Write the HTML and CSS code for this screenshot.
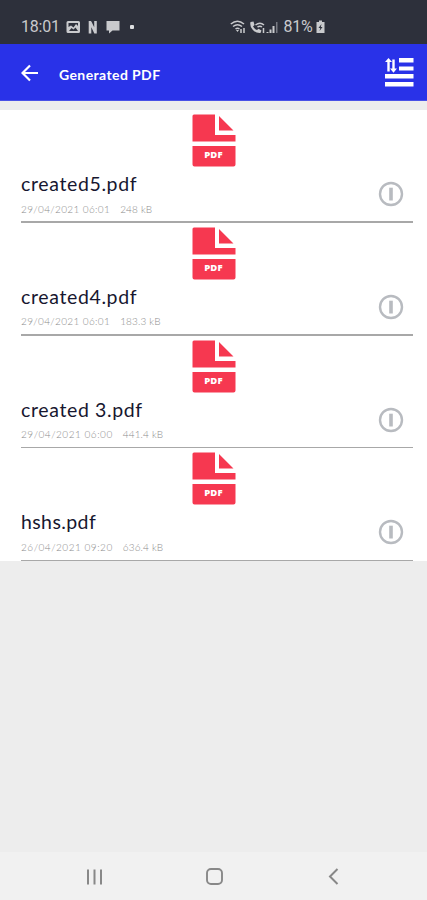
FILE: index.html
```html
<!DOCTYPE html>
<html lang="en">
<head>
<meta charset="utf-8">
<title>Generated PDF</title>
<link rel="stylesheet" href="styles.css">
</head>
<body>
<svg width="0" height="0" class="defs" aria-hidden="true">
  <symbol id="pdf" viewBox="0 0 44 53">
    <path d="M2 .5H23V21H43.5V27.5H.5V2Q.5.5 2 .5ZM27 2V16.5H41.5ZM.5 32H43.5V50.5Q43.5 52.5 41.5 52.5H2.500Q.5 52.500 .5 50.500Z" fill="#f63850"/>
  </symbol>
  <symbol id="info" viewBox="0 0 26 26">
    <circle cx="13" cy="13" r="11" fill="none" stroke="#b8bbc0" stroke-width="2.400"/>
    <path d="M13 6.700V19.500" stroke="#b8bbc0" stroke-width="3.600"/>
  </symbol>
</svg>
<div class="screen">
  <div class="status">
    <span class="time">18:01</span>
    <svg class="notes" width="72" height="16" viewBox="0 0 72 16">
      <path fill-rule="evenodd" fill="#c9cacd" d="M2 2H12.500Q14 2 14 3.500V12.500Q14 14 12.500 14H2Q.5 14 .5 12.500V3.500Q.5 2 2 2ZM2.500 4V8L5 6.500 7.500 8.500 10 5 12 7V4ZM3 12H12L9.500 8.500 7.500 10.500 5.500 9Z"/>
      <path d="M24 2V14.500M29.500 2V14.500M24 2.500L29.500 14" fill="none" stroke="#c9cacd" stroke-width="2.600"/>
      <path d="M40.500 2H53.500V11.500H46.500L43 14.500V11.500H40.500Z" fill="#c9cacd"/>
      <rect x="64" y="6" width="4" height="4" rx="1" fill="#dedfe1"/>
    </svg>
    <svg class="signal" width="50" height="16" viewBox="0 0 50 16">
      <g fill="none" stroke="#c9cacd" stroke-width="1.500">
        <path d="M.8 5Q7.500-.5 14 5M3 7.500Q7.500 4 12 7.500M5.500 10Q7.500 8.500 9.500 10"/>
        <path d="M11 10V14M14 14V9M25.500 6Q30 2.500 34 6M27.500 8Q30 6.500 32 8M33.500 9V14"/>
      </g>
      <path d="M20.500 3L23.500 2.500 24.500 6 23 7.500Q24.500 10 27 11L28.500 9.800 31.500 11.500 30.500 14Q26 14.500 22.500 10.500 19.500 7 20.500 3ZM6 11H9L7.500 13Z" fill="#c9cacd"/>
      <path d="M36.500 13H38.500V14H36.500ZM39.500 10.500H41.500V14H39.500ZM42.500 7H44.500V14H42.500Z" fill="#c9cacd"/>
      <path d="M46 3H47.500V14H46Z" fill="#777982"/>
    </svg>
    <span class="percent">81%</span>
    <svg class="battery" width="9" height="14" viewBox="0 0 9 14">
      <path fill="#c9cacd" fill-rule="evenodd" d="M3 .5H6V2H8.500V13H.5V2H3ZM5.500 4L2.500 8H4.300L3.500 11 6.500 7H4.800Z"/>
    </svg>
  </div>
  <header class="bar">
    <svg class="back" width="18" height="18" viewBox="0 0 18 18">
      <path d="M17 9H2M9 1.500L1.500 9 9 16.500" fill="none" stroke="#fff" stroke-width="2.200"/>
    </svg>
    <h1>Generated PDF</h1>
    <svg class="sort" width="30" height="31" viewBox="0 0 30 31">
      <path fill="#fff" d="M15 1H29.500V5.500H15ZM15 9.500H29.500V13.500H15ZM1 17H29.500V21.500H1ZM1 25H29.500V29.500H1ZM4.500 1L8 5H5.700V14.500H3.300V5H1ZM8.300 2.500H10.700V11.500H13L9.500 15.800 6 11.500H8.300Z"/>
    </svg>
  </header>
  <ul class="files">
    <li class="file">
      <div class="icon"><svg width="44" height="53"><use href="#pdf"/></svg><span class="label">PDF</span></div>
      <div class="name">created5.pdf</div>
      <div class="meta"><span class="date">29/04/2021 06:01</span><span>248 kB</span></div>
      <svg class="info" width="26" height="26"><use href="#info"/></svg>
    </li>
    <li class="file">
      <div class="icon"><svg width="44" height="53"><use href="#pdf"/></svg><span class="label">PDF</span></div>
      <div class="name">created4.pdf</div>
      <div class="meta"><span class="date">29/04/2021 06:01</span><span>183.3 kB</span></div>
      <svg class="info" width="26" height="26"><use href="#info"/></svg>
    </li>
    <li class="file">
      <div class="icon"><svg width="44" height="53"><use href="#pdf"/></svg><span class="label">PDF</span></div>
      <div class="name">created 3.pdf</div>
      <div class="meta wide"><span class="date">29/04/2021 06:00</span><span>441.4 kB</span></div>
      <svg class="info" width="26" height="26"><use href="#info"/></svg>
    </li>
    <li class="file">
      <div class="icon"><svg width="44" height="53"><use href="#pdf"/></svg><span class="label">PDF</span></div>
      <div class="name short">hshs.pdf</div>
      <div class="meta wide"><span class="date">26/04/2021 09:20</span><span>636.4 kB</span></div>
      <svg class="info" width="26" height="26"><use href="#info"/></svg>
    </li>
  </ul>
  <nav class="nav">
    <svg width="18" height="18" viewBox="0 0 18 18"><path d="M2 1.500V16.500M8.500 1.500V16.500M15 1.500V16.500" stroke="#888" stroke-width="2" fill="none"/></svg>
    <svg width="18" height="18" viewBox="0 0 18 18"><rect x="1" y="1" width="15" height="15" rx="4" stroke="#888" stroke-width="1.900" fill="none"/></svg>
    <svg width="18" height="18" viewBox="0 0 18 18"><path d="M12.500 1L5 8.500 12.500 16" stroke="#888" stroke-width="2" fill="none"/></svg>
  </nav>
</div>
</body>
</html>
```
FILE: styles.css
```css
* { box-sizing: border-box; }
body { margin: 0; font-family: Lato, "Liberation Sans", sans-serif; }
svg { display: block; flex: none; }
.defs { position: absolute; }
.screen { width: 427px; height: 900px; display: flex; flex-direction: column; background: #ededed; overflow: hidden; }
.status { height: 44px; padding: 10px 0 0 21px; display: flex; align-items: center; background: #2d303b; color: #c9cacd; font: 16px/20px Roboto, sans-serif; }
.time { width: 45px; letter-spacing: -0.2px; }
.percent { width: 31px; margin-left: 4px; letter-spacing: -0.3px; }
.signal { margin-left: 91.500px; }
.battery { margin-left: 1px; }
.bar { height: 57px; padding: 0 13px 0 21px; display: flex; align-items: center; background: #2932e8; border-bottom: 1px solid #4a51e6; color: #fff; }
.back { margin-top: 1px; }
.bar h1 { flex: 1; margin: 5px 0 0 20px; font-size: 14px; line-height: 18px; font-weight: 700; letter-spacing: 0.4px; }
.sort { margin-top: 1px; }
.files { margin: 9px 0 0; padding: 0; list-style: none; background: #fff; }
.file { height: 112.8px; padding: 4px 14px 0 21px; display: grid; grid-template: 53px 29px 1fr / 1fr 26px; }
.file::after { content: ""; grid-area: 3 / 1 / 4 / 3; align-self: end; height: 1.500px; background: #a8a8a8; }
.icon { grid-area: 1 / 1 / 2 / 3; justify-self: center; width: 44px; margin-right: 7px; position: relative; }
.label { position: absolute; left: 0; right: 0; top: 35px; text-align: center; color: #fff; font: 800 9.5px/12px "Open Sans", sans-serif; letter-spacing: 0.2px; }
.name { grid-area: 2 / 1; padding-top: 5px; color: #17172f; font-size: 19.5px; line-height: 24px; letter-spacing: 0.63px; white-space: nowrap; }
.name.short { letter-spacing: 0.4px; }
.meta { grid-area: 3 / 1; padding-top: 5.500px; display: flex; gap: 10px; color: #8c8c8c; font-size: 10px; font-weight: 300; line-height: 14px; letter-spacing: 0.15px; white-space: nowrap; }
.date { letter-spacing: 0.36px; }
.wide .date { letter-spacing: 0.52px; }
.info { grid-area: 2 / 2 / 4 / 3; margin: 14px 0 0 -9px; }
.nav { height: 48px; margin-top: auto; padding: 1px 84px 0 86px; display: flex; align-items: center; justify-content: space-between; background: #f1f1f1; }
```
